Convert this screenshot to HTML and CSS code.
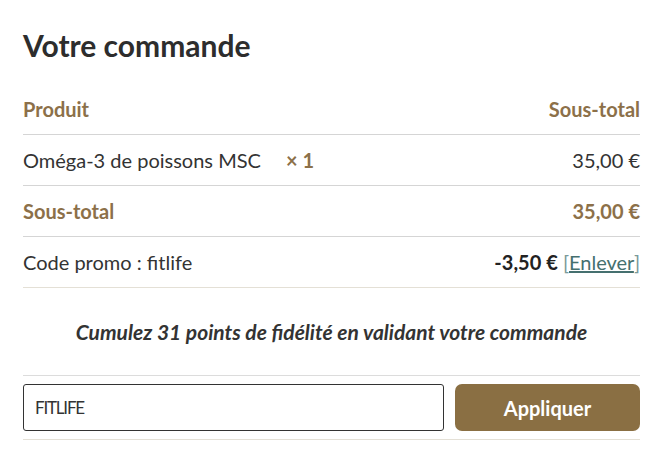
FILE: index.html
```html
<!DOCTYPE html>
<html lang="fr">
<head>
    <meta charset="UTF-8">
    <title>Votre commande</title>
    <link rel="stylesheet" href="styles.css">
</head>
<body>

<div class="order">
    <h2>Votre commande</h2>

    <table class="order-table">
        <thead>
            <tr>
                <th class="col-name">Produit</th>
                <th class="col-total">Sous-total</th>
            </tr>
        </thead>
        <tbody>
            <tr>
                <td class="col-name">Oméga-3 de poissons MSC <strong class="qty">&times;&nbsp;1</strong></td>
                <td class="col-total">35,00&nbsp;€</td>
            </tr>
        </tbody>
        <tfoot>
            <tr class="subtotal">
                <th class="col-name">Sous-total</th>
                <td class="col-total">35,00&nbsp;€</td>
            </tr>
            <tr class="coupon">
                <th class="col-name">Code promo : fitlife</th>
                <td class="col-total"><strong>-3,50&nbsp;€</strong> <span class="remove">[<a href="#">Enlever</a>]</span></td>
            </tr>
        </tfoot>
    </table>

    <p class="points">Cumulez 31 points de fidélité en validant votre commande</p>

    <form class="coupon-form">
        <input type="text" class="coupon-input" value="FITLIFE" autofocus>
        <button type="button" class="coupon-btn">Appliquer</button>
    </form>
</div>

<script>
    // put the caret after the code, as when the user has just typed it
    const codeInput = document.querySelector('.coupon-input');
    codeInput.focus();
    codeInput.setSelectionRange(codeInput.value.length, codeInput.value.length);
</script>

</body>
</html>
```

FILE: styles.css
```css
body {
    margin: 0;
    background: #fff;
    font-family: Lato, "Open Sans", sans-serif;
    color: #333;
}
.order {
    padding: 0 24px 0 23px;
}
.order h2 {
    margin: 0;
    padding-top: 27px;
    font-size: 30px;
    line-height: 36px;
    font-weight: bold;
    color: #2d2d2d;
}
.order-table {
    width: 100%;
    margin-top: 34px;
    border-collapse: collapse;
    font-size: 20px;
}
.order-table th,
.order-table td {
    padding: 0;
    height: 50px;
    text-align: left;
    vertical-align: middle;
    border-bottom: 1px solid #d5d5d5;
}
.order-table thead th {
    height: 24px;
    padding-bottom: 13px;
    vertical-align: top;
    line-height: 24px;
    color: #8c7049;
}
.order-table .col-total {
    text-align: right;
}
.order-table td,
.order-table .coupon th {
    font-weight: normal;
    color: #333;
}
.qty {
    margin-left: 20px;
    color: #8c7049;
}
.subtotal th,
.subtotal td {
    color: #8c7049;
    font-weight: bold;
}
.coupon th,
.coupon td {
    border-bottom-color: #e4e0d6;
}
.coupon strong {
    color: #222;
}
.remove {
    color: #7a9a9a;
}
.remove a {
    color: #45706f;
}
.points {
    margin: 0;
    padding: 31px 0 31px;
    text-align: center;
    font-style: italic;
    font-weight: bold;
    font-size: 21px;
    color: #333;
    border-bottom: 1px solid #dcdcdc;
}
.coupon-form {
    display: flex;
    gap: 11px;
    padding: 8px 0 8px;
    border-bottom: 1px solid #e4e0d6;
}
.coupon-input {
    flex: 1;
    height: 47px;
    box-sizing: border-box;
    padding: 0 11px;
    border: 1px solid #333;
    border-radius: 3px;
    outline: none;
    font-family: Lato, sans-serif;
    font-size: 17px;
    letter-spacing: -1.2px;
    color: #333;
    caret-color: #000;
}
.coupon-btn {
    width: 185px;
    height: 47px;
    border: none;
    border-radius: 7px;
    background: #8a6f43;
    color: #fff;
    font-family: Lato, sans-serif;
    font-weight: bold;
    font-size: 20px;
}
```
